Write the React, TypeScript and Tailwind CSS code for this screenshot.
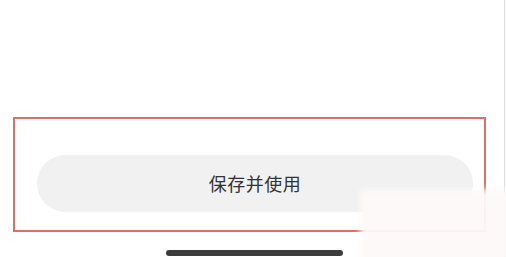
export default function App() {
  return (
    <div
      className="relative w-[506px] h-[257px] overflow-hidden bg-white"
      style={{ fontFamily: '"Noto Sans CJK SC", "Noto Sans", sans-serif' }}
    >
      <div className="w-[505px] h-full border-r border-[#dcdcdc] pt-[117px]">
        {/* highlighted action area */}
        <div className="ml-[13px] w-[473px] h-[115px] border-2 border-[#d8716b] pt-[36px] pl-[22px] pr-[11px]">
          <button className="w-full h-[57px] rounded-full bg-[#f1f1f1] flex items-center justify-center text-[18px] text-[#333333] tracking-[0.5px]">
            保存并使用
          </button>
        </div>

        {/* home indicator */}
        <div className="ml-[166px] mt-[18px] w-[177px] h-[6px] rounded-full bg-[#3c3c3c]" />
      </div>

      {/* watermark smudge */}
      <div className="absolute left-[360px] top-[189px] w-[150px] h-[72px] bg-[#fdf9f9]/95 blur-[3px]" />
    </div>
  );
}
